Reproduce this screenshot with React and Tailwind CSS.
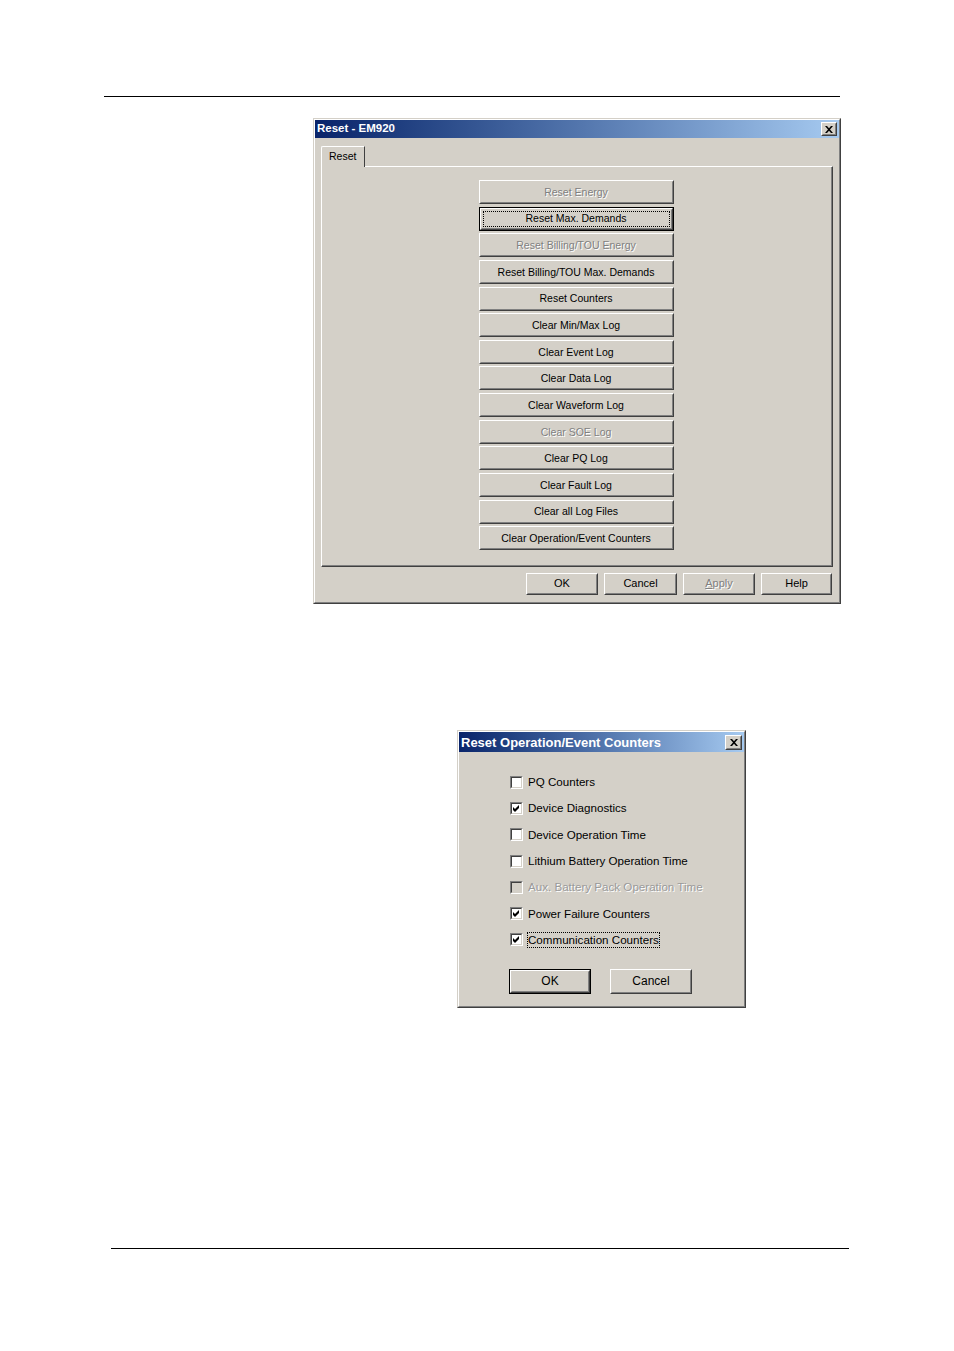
import React from "react";

const FONT = { fontFamily: '"Liberation Sans", Arial, sans-serif' };

function CloseBtn({ className = "" }) {
  return (
    <div className={`border border-t-white border-l-white border-r-[#404040] border-b-[#404040] bg-[#d4d0c8] ${className}`}>
      <div className="w-full h-full border border-t-[#d4d0c8] border-l-[#d4d0c8] border-r-[#808080] border-b-[#808080] flex items-center justify-center">
        <svg width="8" height="7" viewBox="0 0 8 7">
          <path d="M0 0h2l2 2.3L6 0h2L5 3.5 8 7H6L4 4.7 2 7H0l3-3.5z" fill="#000" />
        </svg>
      </div>
    </div>
  );
}

function Btn({ children, disabled, focused, def, className = "", textClass = "" }) {
  const label = (
    <span
      className={`${disabled ? "text-[#808080] [text-shadow:1px_1px_0_#ffffff]" : "text-black"} ${textClass}`}
    >
      {children}
    </span>
  );
  if (focused || def) {
    return (
      <div className={`border border-black bg-[#d4d0c8] ${className}`}>
        <div className="w-full h-full border border-t-white border-l-white border-r-[#404040] border-b-[#404040]">
          <div className="w-full h-full border border-t-[#d4d0c8] border-l-[#d4d0c8] border-r-[#808080] border-b-[#808080] flex items-center justify-center p-[1px]">
            {focused ? (
              <div className="w-full h-full border border-dotted border-black flex items-center justify-center">
                {label}
              </div>
            ) : (
              label
            )}
          </div>
        </div>
      </div>
    );
  }
  return (
    <div className={`border border-t-white border-l-white border-r-[#404040] border-b-[#404040] bg-[#d4d0c8] ${className}`}>
      <div className="w-full h-full border border-t-[#d4d0c8] border-l-[#d4d0c8] border-r-[#808080] border-b-[#808080] flex items-center justify-center">
        {label}
      </div>
    </div>
  );
}

function Check({ checked, disabled }) {
  return (
    <div className="w-[13px] h-[13px] border border-t-[#808080] border-l-[#808080] border-r-white border-b-white shrink-0">
      <div
        className={`w-full h-full border border-t-[#404040] border-l-[#404040] border-r-[#d4d0c8] border-b-[#d4d0c8] flex items-center justify-center ${
          disabled ? "bg-[#d4d0c8]" : "bg-white"
        }`}
      >
        {checked && (
          <svg width="7" height="7" viewBox="0 0 7 7">
            <polygon points="0,2 2,4 6,0 6,3 2,7 0,5" fill={disabled ? "#808080" : "#000"} />
          </svg>
        )}
      </div>
    </div>
  );
}

const resetButtons = [
  { t: "Reset Energy", d: true },
  { t: "Reset Max. Demands", f: true },
  { t: "Reset Billing/TOU Energy", d: true },
  { t: "Reset Billing/TOU Max. Demands" },
  { t: "Reset Counters" },
  { t: "Clear Min/Max Log" },
  { t: "Clear Event Log" },
  { t: "Clear Data Log" },
  { t: "Clear Waveform Log" },
  { t: "Clear SOE Log", d: true },
  { t: "Clear PQ Log" },
  { t: "Clear Fault Log" },
  { t: "Clear all Log Files" },
  { t: "Clear Operation/Event Counters" },
];

function ResetDialog() {
  return (
    <div className="mt-[21px] ml-[313px] w-[528px] h-[486px] border border-t-[#d4d0c8] border-l-[#d4d0c8] border-r-[#404040] border-b-[#404040] bg-[#d4d0c8]">
      <div className="w-full h-full border border-t-white border-l-white border-r-[#808080] border-b-[#808080] flex flex-col">
        <div className="h-[18px] bg-gradient-to-r from-[#0a246a] to-[#a6caf0] flex items-center justify-between pl-[2px] pr-[2px]">
          <span className="text-white font-bold text-[11.5px] leading-none">Reset - EM920</span>
          <CloseBtn className="w-[16px] h-[14px]" />
        </div>
        <div className="pl-[6px] pr-[6px] pt-[8px] flex flex-col">
          <div className="flex">
            <div className="relative z-10 h-[21px] w-[44px] -mb-[1px] bg-[#d4d0c8] border-t border-l border-t-white border-l-white border-r border-r-[#404040] rounded-tl-[2px] flex items-start pt-[3px] pl-[7px]">
              <span className="text-[10.5px] text-black leading-[12px]">Reset</span>
            </div>
          </div>
          <div className="h-[401px] border border-t-white border-l-white border-r-[#404040] border-b-[#404040]">
            <div className="w-full h-full border-r border-b border-r-[#808080] border-b-[#808080] flex flex-col items-center pt-[13px] gap-[2.65px]">
              {resetButtons.map((b) => (
                <Btn
                  key={b.t}
                  disabled={b.d}
                  focused={b.f}
                  className="w-[195px] h-[24px] -ml-[1px]"
                  textClass="text-[10.5px] leading-none"
                >
                  {b.t}
                </Btn>
              ))}
            </div>
          </div>
          <div className="mt-[6px] h-[22px] flex justify-end gap-[6px] pr-[1px]">
            <Btn className="w-[72px] h-[22px]" textClass="text-[11px] leading-none -mt-[2px]">OK</Btn>
            <Btn className="w-[73px] h-[22px]" textClass="text-[11px] leading-none -mt-[2px]">Cancel</Btn>
            <Btn disabled className="w-[72px] h-[22px]" textClass="text-[11px] leading-none -mt-[2px]">
              <span className="underline">A</span>pply
            </Btn>
            <Btn className="w-[71px] h-[22px]" textClass="text-[11px] leading-none -mt-[2px]">Help</Btn>
          </div>
        </div>
      </div>
    </div>
  );
}

const counters = [
  { t: "PQ Counters" },
  { t: "Device Diagnostics", c: true },
  { t: "Device Operation Time" },
  { t: "Lithium Battery Operation Time" },
  { t: "Aux. Battery Pack Operation Time", d: true },
  { t: "Power Failure Counters", c: true },
  { t: "Communication Counters", c: true, f: true },
];

function CountersDialog() {
  return (
    <div className="mt-[126px] ml-[457px] w-[289px] h-[278px] border border-t-[#d4d0c8] border-l-[#d4d0c8] border-r-[#404040] border-b-[#404040] bg-[#d4d0c8]">
      <div className="w-full h-full border border-t-white border-l-white border-r-[#808080] border-b-[#808080] flex flex-col">
        <div className="h-[20px] bg-gradient-to-r from-[#0a246a] to-[#a6caf0] flex items-center justify-between pl-[2px] pr-[2px]">
          <span className="text-white font-bold text-[13px] leading-none">Reset Operation/Event Counters</span>
          <CloseBtn className="w-[17px] h-[15px]" />
        </div>
        <div className="pl-[51px] pt-[17px] flex flex-col">
          {counters.map((c) => (
            <div key={c.t} className="h-[26.3px] flex items-center gap-[4px]">
              <Check checked={c.c} disabled={c.d} />
              <span
                className={`text-[11.6px] leading-[14px] ${
                  c.d ? "text-[#9a9a9a] [text-shadow:1px_1px_0_#ffffff]" : "text-black"
                } ${c.f ? "border border-dotted border-black" : "border border-transparent"}`}
              >
                {c.t}
              </span>
            </div>
          ))}
          <div className="mt-[16px] -ml-[1px] flex gap-[19px]">
            <Btn def className="w-[82px] h-[25px]" textClass="text-[12px] leading-none -mt-[2px]">OK</Btn>
            <Btn className="w-[82px] h-[25px]" textClass="text-[12px] leading-none -mt-[2px]">Cancel</Btn>
          </div>
        </div>
      </div>
    </div>
  );
}

export default function App() {
  return (
    <div className="w-[954px] h-[1351px] bg-white overflow-hidden flex flex-col" style={FONT}>
      <div className="mt-[96px] ml-[104px] w-[736px] h-px bg-black shrink-0" />
      <ResetDialog />
      <CountersDialog />
      <div className="mt-[240px] ml-[111px] w-[738px] h-px bg-black shrink-0" />
    </div>
  );
}
